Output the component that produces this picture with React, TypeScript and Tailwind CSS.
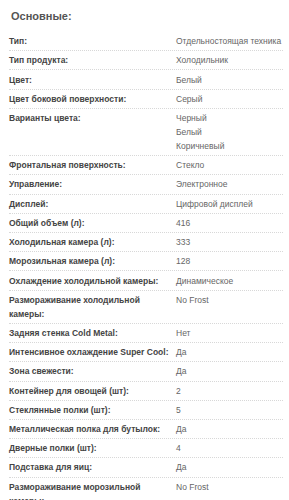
import React from 'react';

interface Spec {
  label: string;
  value: string[];
}

const specs: Spec[] = [
  { label: 'Тип:', value: ['Отдельностоящая техника'] },
  { label: 'Тип продукта:', value: ['Холодильник'] },
  { label: 'Цвет:', value: ['Белый'] },
  { label: 'Цвет боковой поверхности:', value: ['Серый'] },
  { label: 'Варианты цвета:', value: ['Черный', 'Белый', 'Коричневый'] },
  { label: 'Фронтальная поверхность:', value: ['Стекло'] },
  { label: 'Управление:', value: ['Электронное'] },
  { label: 'Дисплей:', value: ['Цифровой дисплей'] },
  { label: 'Общий объем (л):', value: ['416'] },
  { label: 'Холодильная камера (л):', value: ['333'] },
  { label: 'Морозильная камера (л):', value: ['128'] },
  { label: 'Охлаждение холодильной камеры:', value: ['Динамическое'] },
  { label: 'Размораживание холодильной камеры:', value: ['No Frost'] },
  { label: 'Задняя стенка Cold Metal:', value: ['Нет'] },
  { label: 'Интенсивное охлаждение Super Cool:', value: ['Да'] },
  { label: 'Зона свежести:', value: ['Да'] },
  { label: 'Контейнер для овощей (шт):', value: ['2'] },
  { label: 'Стеклянные полки (шт):', value: ['5'] },
  { label: 'Металлическая полка для бутылок:', value: ['Да'] },
  { label: 'Дверные полки (шт):', value: ['4'] },
  { label: 'Подставка для яиц:', value: ['Да'] },
  { label: 'Размораживание морозильной камеры:', value: ['No Frost'] },
];

const App: React.FC = () => {
  return (
    <div className="bg-white min-h-screen font-['Liberation_Sans',Arial,sans-serif] pt-[9px] pl-[9px] pr-[6px]">
      <h3 className="pl-[2px] text-[11px] leading-[14px] font-bold text-[#555] mb-[9px]">Основные:</h3>
      <div>
        {specs.map((spec) => (
          <div
            key={spec.label}
            className="flex border-b border-dotted border-[#d8d8d8] py-[2.12px] text-[8.5px] leading-[14px]"
          >
            <div className="w-[167px] shrink-0 pr-[4px] font-bold text-[#444]">{spec.label}</div>
            <div className="flex-1 text-[#666]">
              {spec.value.map((v) => (
                <div key={v}>{v}</div>
              ))}
            </div>
          </div>
        ))}
      </div>
    </div>
  );
};

export default App;
